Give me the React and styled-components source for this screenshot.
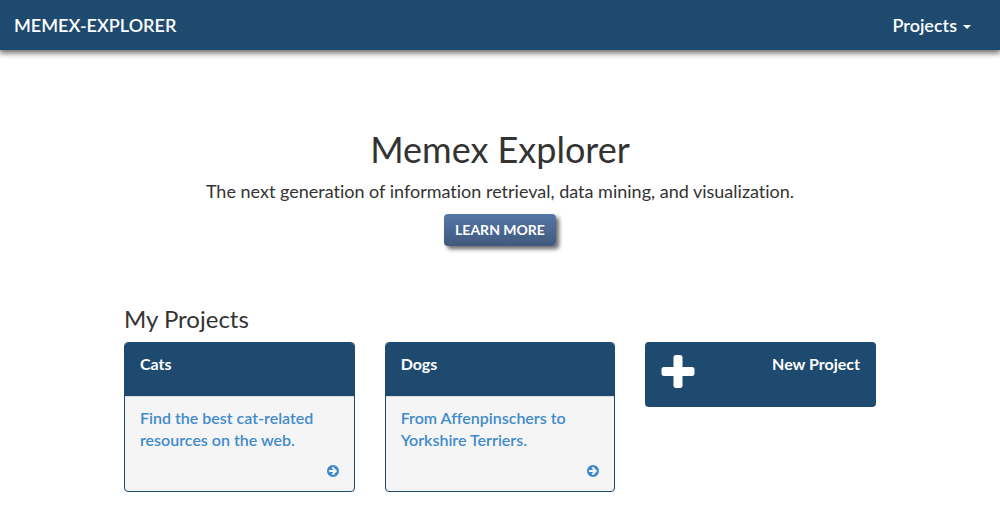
import React from "react";
import styled, { createGlobalStyle } from "styled-components";

const navy = "#1e4a70";
const link = "#428bca";

const GlobalStyle = createGlobalStyle`
  *, *::before, *::after { box-sizing: border-box; }
  body {
    margin: 0;
    background: #fff;
    color: #333;
    font-family: Lato, "Liberation Sans", sans-serif;
    font-size: 16px;
    font-variant-ligatures: none;
    line-height: 22px;
  }
`;

const Navbar = styled.nav`
  display: flex;
  align-items: center;
  justify-content: space-between;
  height: 50px;
  padding: 0 29px 0 14px;
  background: ${navy};
  box-shadow: 0 2px 6px 1px rgba(0, 0, 0, 0.6);
`;

const Brand = styled.a`
  color: #fff;
  font-size: 18px;
  font-weight: 600;
  text-decoration: none;
`;

const MenuButton = styled.button`
  display: flex;
  align-items: center;
  gap: 6px;
  padding: 0;
  border: 0;
  background: none;
  color: #fff;
  font: inherit;
  font-size: 18px;
  font-weight: 600;
  cursor: pointer;
`;

const Caret = styled.span`
  margin-top: 4px;
  border-top: 4px solid #fff;
  border-left: 4px solid transparent;
  border-right: 4px solid transparent;
`;

const Hero = styled.header`
  display: flex;
  flex-direction: column;
  align-items: center;
  padding: 79px 16px 59px;
  text-align: center;
`;

const Title = styled.h1`
  margin: 0 0 11px;
  font-size: 36px;
  font-weight: 400;
  line-height: 40px;
`;

const Tagline = styled.p`
  margin: 0 0 12px;
  font-size: 18px;
  line-height: 22px;
`;

const LearnMore = styled.button`
  height: 32px;
  padding: 0 11px;
  border: 0;
  border-radius: 4px;
  background: linear-gradient(#5477a6, #41597d);
  box-shadow: 3px 3px 4px rgba(0, 0, 0, 0.6);
  color: #fff;
  font: inherit;
  font-size: 14px;
  font-weight: 700;
  cursor: pointer;
`;

const Projects = styled.main`
  max-width: 784px;
  margin: 0 auto;
  padding: 0 16px 32px;
`;

const Heading = styled.h2`
  margin: 0 0 9px;
  font-size: 24px;
  font-weight: 400;
  line-height: 28px;
`;

const Grid = styled.div`
  display: grid;
  grid-template-columns: repeat(3, 1fr);
  align-items: start;
  gap: 30px;
`;

const Card = styled.a`
  display: block;
  overflow: hidden;
  border: 1px solid ${navy};
  border-radius: 4px;
  background: #f5f5f5;
  color: ${link};
  text-decoration: none;
`;

const CardHeader = styled.h3`
  height: 54px;
  margin: 0;
  padding: 10px 15px;
  border-bottom: 1px solid #ddd;
  background: ${navy};
  color: #fff;
  font-size: 16px;
  font-weight: 700;
  line-height: 22px;
`;

const CardBody = styled.div`
  display: flex;
  flex-direction: column;
  gap: 13px;
  padding: 10px 14px 13px 15px;
`;

const Description = styled.p`
  margin: 0;
  font-weight: 600;
`;

const NewProject = styled.button`
  display: flex;
  align-items: flex-start;
  justify-content: space-between;
  width: 100%;
  height: 65px;
  padding: 10px 16px 8px 12px;
  border: 0;
  border-radius: 4px;
  background: ${navy};
  color: #fff;
  font: inherit;
  font-weight: 700;
  cursor: pointer;
`;

const NewLabel = styled.span`
  padding-top: 1px;
`;

const ArrowIcon = styled.svg`
  display: block;
  align-self: flex-end;
  width: 14px;
  height: 14px;
  fill: currentColor;
`;

const PlusIcon = styled.svg`
  display: block;
  width: 42px;
  height: 42px;
  fill: currentColor;
`;

const projects = [
  { name: "Cats", description: "Find the best cat-related resources on the web." },
  { name: "Dogs", description: "From Affenpinschers to Yorkshire Terriers." },
];

function ProjectCard({ name, description }) {
  return (
    <Card href="#">
      <CardHeader>{name}</CardHeader>
      <CardBody>
        <Description>{description}</Description>
        <ArrowIcon viewBox="0 0 1792 1792" aria-hidden="true">
          <path d="M1413 896q0-27-18-45l-362-362-91-91q-18-18-45-18t-45 18l-91 91q-18 18-18 45t18 45l189 189h-502q-26 0-45 19t-19 45v128q0 26 19 45t45 19h502l-189 189q-19 19-19 45t19 45l91 91q18 18 45 18t45-18l91-91 362-362q18-18 18-45zm251 0q0 209-103 385.500t-279.500 279.500-385.500 103-385.500-103-279.500-279.500-103-385.500 103-385.500 279.500-279.500 385.500-103 385.500 103 279.500 279.500 103 385.500z" />
        </ArrowIcon>
      </CardBody>
    </Card>
  );
}

export default function App() {
  return (
    <>
      <GlobalStyle />
      <Navbar>
        <Brand href="#">MEMEX-EXPLORER</Brand>
        <MenuButton type="button" aria-haspopup="true">
          Projects
          <Caret />
        </MenuButton>
      </Navbar>
      <Hero>
        <Title>Memex Explorer</Title>
        <Tagline>The next generation of information retrieval, data mining, and visualization.</Tagline>
        <LearnMore type="button">LEARN MORE</LearnMore>
      </Hero>
      <Projects>
        <Heading>My Projects</Heading>
        <Grid>
          {projects.map((project) => (
            <ProjectCard key={project.name} {...project} />
          ))}
          <NewProject type="button">
            <PlusIcon viewBox="0 0 1792 1792" aria-hidden="true">
              <path d="M1600 736v192q0 40-28 68t-68 28h-416v416q0 40-28 68t-68 28h-192q-40 0-68-28t-28-68v-416h-416q-40 0-68-28t-28-68v-192q0-40 28-68t68-28h416v-416q0-40 28-68t68-28h192q40 0 68 28t28 68v416h416q40 0 68 28t28 68z" />
            </PlusIcon>
            <NewLabel>New Project</NewLabel>
          </NewProject>
        </Grid>
      </Projects>
    </>
  );
}
